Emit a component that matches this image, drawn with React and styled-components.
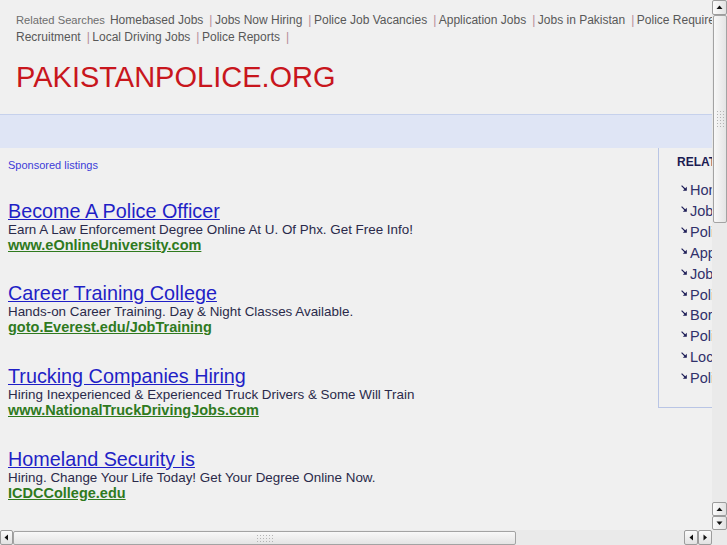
import React from 'react';
import styled, { createGlobalStyle } from 'styled-components';

const GlobalStyle = createGlobalStyle`
  html, body { margin: 0; padding: 0; overflow: hidden; background: #f0f0f0; }
  body { font-family: "Liberation Sans", Arial, Helvetica, sans-serif; }
  * { box-sizing: border-box; }
`;

const Frame = styled.div`
  width: 727px;
  height: 545px;
  display: grid;
  grid-template-columns: 712px 15px;
  grid-template-rows: 530px 15px;
  background: #f0f0f0;
`;

const Viewport = styled.div`
  overflow: hidden;
`;

const Page = styled.div`
  width: 955px;
`;

const Header = styled.header`
  padding: 12px 15px 0 16px;
`;

const Related = styled.div`
  font-size: 12px;
  line-height: 17px;
  color: #5a5a5a;
`;

const RelatedLabel = styled.span`
  font-size: 11.2px;
  color: #6d6d6d;
  margin-right: 5px;
`;

const RelatedLink = styled.a`
  color: #585858;
  text-decoration: none;
  margin-right: 6px;
`;

const Pipe = styled.span`
  color: #b58d98;
  margin-right: 2.5px;
`;

const SiteTitle = styled.h1`
  margin: 14px 0 0;
  font-weight: normal;
  font-size: 29px;
  line-height: 34px;
  color: #c8161d;
`;

const Band = styled.div`
  margin-top: 20px;
  height: 34px;
  border-top: 1px solid #c6d1ec;
  background: #dfe5f5;
`;

const Main = styled.div`
  display: flex;
  align-items: flex-start;
`;

const Listings = styled.section`
  width: 658px;
  flex: none;
  padding: 11px 0 0 8px;
`;

const Sponsored = styled.div`
  font-size: 11px;
  line-height: 13px;
  color: #3c3cd8;
`;

const AdList = styled.div`
  margin-top: 28.5px;
  display: flex;
  flex-direction: column;
  gap: 31.7px;
`;

const Ad = styled.div`
  display: flex;
  flex-direction: column;
  align-items: flex-start;
`;

const AdTitle = styled.a`
  font-size: 19.8px;
  line-height: 21px;
  color: #1f1fc6;
  text-decoration: underline;
`;

const AdDesc = styled.div`
  font-size: 13.4px;
  line-height: 16px;
  color: #2a2a4a;
`;

const AdUrl = styled.a`
  font-size: 14.5px;
  line-height: 14px;
  font-weight: bold;
  color: #2f7a1e;
  text-decoration: underline;
`;

const Sidebar = styled.aside`
  width: 290px;
  flex: none;
  border-left: 1px solid #b9c5e5;
  border-bottom: 1px solid #b9c5e5;
  padding: 7px 0 18px 18px;
`;

const SideHeading = styled.div`
  font-size: 12px;
  line-height: 14px;
  font-weight: bold;
  color: #1b1b52;
  white-space: nowrap;
`;

const SideList = styled.ul`
  list-style: none;
  margin: 11px 0 0;
  padding: 0 0 0 4px;
`;

const SideItem = styled.li`
  display: flex;
  align-items: flex-start;
  font-size: 14.5px;
  line-height: 20.9px;
  color: #31316b;
  white-space: nowrap;
`;

const SideArrow = styled.svg`
  flex: none;
  width: 6px;
  height: 6px;
  margin: 5px 3px 0 0;
`;

/* scrollbars */
const trackBg = `
  background-color: #f4f4f4;
  background-image: radial-gradient(circle, #dedede 0.6px, transparent 0.8px);
  background-size: 2px 2px;
`;

const VBar = styled.div`
  display: flex;
  flex-direction: column;
  ${trackBg}
`;

const HBar = styled.div`
  display: flex;
  ${trackBg}
`;

const Corner = styled.div`
  ${trackBg}
`;

const Btn = styled.div`
  flex: none;
  width: ${(p) => p.$w}px;
  height: ${(p) => p.$h}px;
  border: 1px solid #9c9c9c;
  border-radius: 2px;
  background: linear-gradient(${(p) => (p.$horiz ? '180deg' : '90deg')}, #fbfbfb, #e2e2e2);
  display: flex;
  align-items: center;
  justify-content: center;
`;

const VThumb = styled.div`
  flex: none;
  height: 208px;
  margin: 0 0 0 1px;
  border: 1px solid #a3a3a3;
  border-radius: 2px;
  background: linear-gradient(90deg, #f8f8f8, #e4e4e4);
  display: flex;
  justify-content: center;
  padding-top: 94px;
`;

const HThumb = styled.div`
  flex: none;
  width: 503px;
  margin: 1px 0 0;
  border: 1px solid #a3a3a3;
  border-radius: 2px;
  background: linear-gradient(180deg, #f8f8f8, #e4e4e4);
  display: flex;
  align-items: center;
  padding-left: 242px;
`;

const Grip = styled.div`
  width: ${(p) => p.$w}px;
  height: ${(p) => p.$h}px;
  background-image: radial-gradient(circle, #b4b4b4 0.7px, transparent 0.9px);
  background-size: 3px 3px;
`;

const Spacer = styled.div`
  flex: 1;
`;

const Tri = ({ dir }) => {
  const pts = {
    up: '0.5,4 3.5,0.5 6.5,4',
    down: '0.5,0.5 3.5,4 6.5,0.5',
    left: '4,0.5 0.5,3.5 4,6.5',
    right: '0.5,0.5 4,3.5 0.5,6.5',
  }[dir];
  const vert = dir === 'up' || dir === 'down';
  return (
    <svg width={vert ? 7 : 5} height={vert ? 5 : 7} viewBox={vert ? '0 0 7 5' : '0 0 5 7'}>
      <polygon points={pts} fill="#111" />
    </svg>
  );
};

const headerLinks = [
  'Homebased Jobs',
  'Jobs Now Hiring',
  'Police Job Vacancies',
  'Application Jobs',
  'Jobs in Pakistan',
  'Police Requirement',
  'Border Security Jobs',
  'Police Recruitment',
  'Local Driving Jobs',
  'Police Reports',
];

const ads = [
  {
    title: 'Become A Police Officer',
    desc: 'Earn A Law Enforcement Degree Online At U. Of Phx. Get Free Info!',
    url: 'www.eOnlineUniversity.com',
  },
  {
    title: 'Career Training College',
    desc: 'Hands-on Career Training. Day & Night Classes Available.',
    url: 'goto.Everest.edu/JobTraining',
  },
  {
    title: 'Trucking Companies Hiring',
    desc: 'Hiring Inexperienced & Experienced Truck Drivers & Some Will Train',
    url: 'www.NationalTruckDrivingJobs.com',
  },
  {
    title: 'Homeland Security is',
    desc: 'Hiring. Change Your Life Today! Get Your Degree Online Now.',
    url: 'ICDCCollege.edu',
  },
];

export default function App() {
  return (
    <>
      <GlobalStyle />
      <Frame>
        <Viewport>
          <Page>
            <Header>
              <Related>
                <RelatedLabel>Related Searches</RelatedLabel>
                {headerLinks.map((l) => (
                  <React.Fragment key={l}>
                    <RelatedLink href="#">{l}</RelatedLink>
                    <Pipe>|</Pipe>
                  </React.Fragment>
                ))}
              </Related>
              <SiteTitle>PAKISTANPOLICE.ORG</SiteTitle>
            </Header>
            <Band />
            <Main>
              <Listings>
                <Sponsored>Sponsored listings</Sponsored>
                <AdList>
                  {ads.map((a) => (
                    <Ad key={a.title}>
                      <AdTitle href="#">{a.title}</AdTitle>
                      <AdDesc>{a.desc}</AdDesc>
                      <AdUrl href="#">{a.url}</AdUrl>
                    </Ad>
                  ))}
                </AdList>
              </Listings>
              <Sidebar>
                <SideHeading>RELATED SEARCHES</SideHeading>
                <SideList>
                  {headerLinks.map((l) => (
                    <SideItem key={l}>
                      <SideArrow viewBox="0 0 6 6">
                        <line x1="0.6" y1="0.6" x2="4" y2="4" stroke="#1b1b55" strokeWidth="1.1" />
                        <polygon points="5.8,1.8 5.8,5.8 1.8,5.8" fill="#1b1b55" />
                      </SideArrow>
                      {l}
                    </SideItem>
                  ))}
                </SideList>
              </Sidebar>
            </Main>
          </Page>
        </Viewport>
        <VBar>
          <Btn $w={15} $h={15}><Tri dir="up" /></Btn>
          <VThumb><Grip $w={9} $h={18} /></VThumb>
          <Spacer />
          <Btn $w={15} $h={14}><Tri dir="up" /></Btn>
          <Btn $w={15} $h={14}><Tri dir="down" /></Btn>
        </VBar>
        <HBar>
          <Btn $w={13} $h={15} $horiz><Tri dir="left" /></Btn>
          <HThumb><Grip $w={18} $h={9} /></HThumb>
          <Spacer />
          <Btn $w={14} $h={15} $horiz><Tri dir="left" /></Btn>
          <Btn $w={14} $h={15} $horiz><Tri dir="right" /></Btn>
        </HBar>
        <Corner />
      </Frame>
    </>
  );
}
